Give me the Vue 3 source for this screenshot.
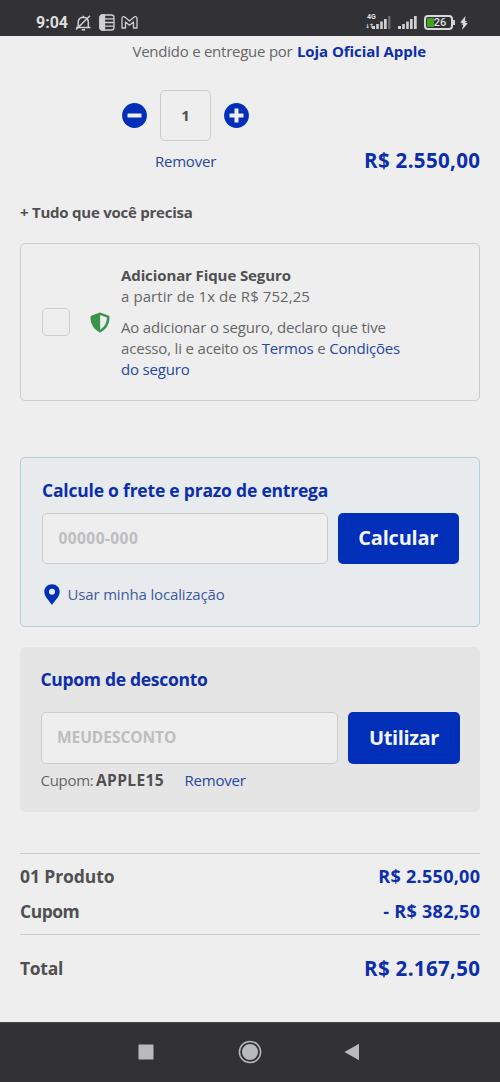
<script setup>
import { ref } from 'vue'

const quantity = ref(1)
const cep = ref('')
const coupon = ref('')
</script>

<template>
  <div class="screen">
    <header class="status">
      <div class="status-left">
        <span class="clock">9:04</span>
        <svg class="bell" width="17" height="18" viewBox="0 0 17 18" fill="none" stroke="#d0d0d2" stroke-width="1.5">
          <path d="M3.2 13.2V8.2C3.2 5.2 5.2 3.4 8.3 3.2c3.1.2 5 2 5 5v5M1.2 13.4h14.2M6.7 15.7h3.4M8.3 1.7v1.5M1 15.5 15 1.8" />
        </svg>
        <svg class="note" width="16" height="17" viewBox="0 0 16 17" fill="none" stroke="#d0d0d2" stroke-width="1.3">
          <rect x=".8" y="1" width="14.2" height="15" rx="2.6" />
          <path d="M1 3.5C1 2 2 1 3.5 1h2v15h-2C2 16 1 15 1 13.500z" fill="#d0d0d2" />
          <path d="M5 4.900h10M5 8.500h10M5 12.100h10" />
        </svg>
        <svg class="mail" width="17" height="13" viewBox="0 0 17 13" fill="none" stroke="#d0d0d2" stroke-width="1.3">
          <path d="M1 2.300C1 .7 2.700.2 3.800 1.100L8.500 5l4.700-3.900C14.300.2 16 .7 16 2.300V12h-3.500V6L8.500 9.200 4.500 6v6H1z" stroke-linejoin="round" />
        </svg>
      </div>
      <div class="status-right">
        <span class="net"><span>4G</span><i>↓↑</i></span>
        <svg class="bars-one" width="19" height="13" viewBox="0 0 19 13" fill="#d0d0d2">
          <path d="M0 10h3v3H0zM4.200 8h2.600v5H4.200zM8.200 5.500h2.600V13H8.200zM12 3h2.700v10H12z" />
          <path d="M16 0h2.500v13H16z" fill="#68686c" />
        </svg>
        <svg class="bars-two" width="19" height="13" viewBox="0 0 19 13" fill="#d0d0d2">
          <path d="M0 10h3v3H0zM4.200 8h2.600v5H4.200zM8.200 5.500h2.600V13H8.200zM12 3h2.700v10H12zM16 0h2.700v13H16z" />
        </svg>
        <div class="battery"><span class="level"></span><span class="percent">26</span></div>
        <svg class="bolt" width="8" height="14" viewBox="0 0 8 14" fill="#d8d8da">
          <path d="M5.500 0 .2 6.500l3 .8-2 .700 2 1L2 14l5.800-6.700-3-.800 2.400-1-2.200-.700z" />
        </svg>
      </div>
    </header>

    <main class="page">
      <p class="seller">
        <span class="seller-label">Vendido e entregue por</span>
        <b class="seller-name">Loja Oficial Apple</b>
      </p>

      <section class="product">
        <div class="quantity">
          <div class="stepper">
            <svg width="25" height="25" viewBox="0 0 25 25" @click="quantity--">
              <circle cx="12.500" cy="12.500" r="12.400" fill="#022fb8" />
              <rect x="5.500" y="10.500" width="14" height="4" rx=".5" fill="#eee" />
            </svg>
            <span class="amount">{{ quantity }}</span>
            <svg width="25" height="25" viewBox="0 0 25 25" @click="quantity++">
              <circle cx="12.500" cy="12.500" r="12.400" fill="#022fb8" />
              <path d="M10.500 5.500h4v5h5v4h-5v5h-4v-5h-5v-4h5z" fill="#eee" />
            </svg>
          </div>
          <a class="link remove-item">Remover</a>
        </div>
        <span class="price large">R$ 2.550,00</span>
      </section>

      <h2 class="needs">+ Tudo que você precisa</h2>

      <section class="insurance">
        <span class="checkbox"></span>
        <svg class="shield" width="20" height="21" viewBox="0 0 20 21">
          <path d="M10 .4 18.300 3.500c.8.300 1.200.8 1.200 1.600C19.500 12 16.300 17.800 10 20.600 3.700 17.800.5 12 .5 5.100c0-.8.4-1.300 1.200-1.600z" fill="#389449" />
          <path d="M10.100 3 16.900 5.600c-.1 5.200-2.300 9.500-6.800 12.100z" fill="#eee" />
        </svg>
        <div class="insurance-text">
          <b class="insurance-title">Adicionar Fique Seguro</b>
          <span class="insurance-price">a partir de 1x de R$ 752,25</span>
          <p>
            Ao adicionar o seguro, declaro que tive<br />
            acesso, li e aceito os <a class="link">Termos</a> e <a class="link">Condições</a><br />
            <a class="link">do seguro</a>
          </p>
        </div>
      </section>

      <section class="shipping">
        <h3 class="shipping-title">Calcule o frete e prazo de entrega</h3>
        <div class="form-row">
          <input v-model="cep" class="field cep" placeholder="00000-000" />
          <button class="button calculate">Calcular</button>
        </div>
        <a class="location">
          <svg width="16" height="21" viewBox="0 0 16 21">
            <path d="M8 .2C3.500.2.300 3.500.300 7.700.300 12.500 5 16.500 8 20.900c3-4.400 7.700-8.400 7.700-13.200C15.700 3.500 12.500.2 8 .2zm0 4.600a3 3 0 1 1 0 6 3 3 0 0 1 0-6z" fill="#022fb8" fill-rule="evenodd" />
          </svg>
          <span>Usar minha localização</span>
        </a>
      </section>

      <section class="coupon">
        <h3 class="coupon-title">Cupom de desconto</h3>
        <div class="form-row">
          <input v-model="coupon" class="field code" placeholder="MEUDESCONTO" />
          <button class="button apply">Utilizar</button>
        </div>
        <p class="applied">
          <span class="applied-label">Cupom:</span>
          <b class="applied-code">APPLE15</b>
          <a class="link remove-coupon">Remover</a>
        </p>
      </section>

      <section class="summary">
        <div class="line"><span class="count">01 Produto</span><span class="price">R$ 2.550,00</span></div>
        <div class="line"><span class="discount">Cupom</span><span class="price">- R$ 382,50</span></div>
        <div class="line total"><span>Total</span><span class="price large">R$ 2.167,50</span></div>
      </section>
    </main>

    <nav class="navbar">
      <svg width="16" height="16" viewBox="0 0 16 16"><rect x=".5" y=".5" width="15" height="15" rx=".5" fill="#b9babc" /></svg>
      <svg class="home" width="24" height="24" viewBox="0 0 24 24">
        <circle cx="12" cy="12" r="10.600" fill="none" stroke="#b9babc" stroke-width="1.500" />
        <circle cx="12" cy="12" r="8" fill="#b9babc" />
      </svg>
      <svg width="16" height="18" viewBox="0 0 16 18"><path d="M.5 9 15 .7v16.600z" fill="#b9babc" /></svg>
    </nav>
  </div>
</template>

<style>
body { background: #eee; }
</style>

<style scoped>
* { box-sizing: border-box; }
p, h2, h3 { margin: 0; }
.screen {
  width: 500px;
  height: 1082px;
  display: flex;
  flex-direction: column;
  overflow: hidden;
  background: #eee;
  color: #666668;
  font-family: "Open Sans", "Noto Sans", sans-serif;
  font-size: 15px;
  line-height: 21px;
  white-space: nowrap;
}

/* status bar */
.status {
  flex: none;
  height: 36px;
  padding: 9px 32px 0 36px;
  display: flex;
  justify-content: space-between;
  background: #323236;
  color: #dededf;
}
.status-left, .status-right { display: flex; align-items: center; height: 27px; }
.clock { font: 700 16px/27px Roboto, sans-serif; width: 38.500px; letter-spacing: 0; }
.note { margin-left: 7px; }
.mail { margin-left: 6.500px; }
.net { width: 11px; height: 15px; margin: -3px -4px 0 0; display: flex; flex-direction: column; font: 700 7px/7px Roboto, sans-serif; }
.net span { margin-left: 2px; }
.net i { font: 700 6px/9px "DejaVu Sans", sans-serif; letter-spacing: -1px; }
.bars-two { margin-left: 7px; }
.battery {
  position: relative;
  width: 29px;
  height: 15px;
  margin: 0 3px 0 7px;
  border: 2px solid #d8d8da;
  border-radius: 4px;
  padding: 1px;
}
.battery::after { content: ""; position: absolute; right: -4px; top: 3px; width: 2px; height: 5px; background: #d0d0d2; }
.level { display: block; width: 7px; height: 100%; border-radius: 1px; background: #3fa51c; }
.percent { position: absolute; inset: 0; padding-left: 3px; text-align: center; font: 500 11px/11px Roboto, sans-serif; }
.bolt { margin-left: 4px; }

/* cart content */
.page { flex: 1; display: flex; flex-direction: column; padding: 5px 20px 0 20px; }
.link { color: #2747a0; }
.seller { padding-left: 112.500px; display: flex; gap: 4.500px; }
.seller-label { letter-spacing: -.25px; }
.seller-name { color: #0c2eab; letter-spacing: -.07px; }
.product { display: flex; justify-content: space-between; align-items: flex-end; margin-top: 28px; height: 82px; }
.quantity { width: 128px; margin-left: 101.500px; height: 82px; display: flex; flex-direction: column; justify-content: space-between; align-items: center; }
.stepper { display: flex; align-items: center; gap: 13px; }
.amount {
  width: 51px;
  height: 51px;
  border: 1.5px solid #ccc;
  border-radius: 5px;
  text-align: center;
  font-weight: 700;
  line-height: 48px;
  color: #505052;
}
.remove-item { letter-spacing: -.2px; }
.price { color: #0c2eab; font-weight: 700; font-size: 18px; letter-spacing: .28px; margin-right: -.28px; }
.large { font-size: 20.5px; letter-spacing: .33px; }
.product .price { line-height: 24px; }
.needs { margin-top: 30px; font-size: 15px; line-height: 21px; letter-spacing: -.24px; color: #505052; }

.insurance {
  margin-top: 20px;
  height: 158px;
  border: 1.5px solid #ccc;
  border-radius: 5px;
  padding-left: 21px;
  display: flex;
  align-items: center;
}
.checkbox { width: 28px; height: 28px; border: 1.5px solid #ccc; border-radius: 5px; }
.shield { margin-left: 20px; }
.insurance-text { display: flex; flex-direction: column; margin-left: 11px; letter-spacing: -.18px; }
.insurance-title { letter-spacing: -.1px; color: #505052; }
.insurance-price { letter-spacing: .08px; margin-bottom: 10px; }

.shipping {
  margin-top: 56px;
  height: 170px;
  padding: 20px 20.5px 0 21px;
  background: #e7ebee;
  border: 1.5px solid #b0cdd8;
  border-radius: 5px;
}
.shipping-title, .coupon-title { font-size: 17.5px; line-height: 24px; color: #0c2eab; letter-spacing: -.21px; }
.form-row { display: flex; gap: 10px; }
.shipping .form-row { margin-top: 11px; }
.field {
  flex: 1;
  min-width: 0;
  height: 51px;
  padding: 0 15.5px 2px;
  background: #eee;
  border: 1.5px solid #ccc;
  border-radius: 5px;
  font: 700 15.5px "Open Sans", sans-serif;
  outline: none;
}
.field::placeholder { color: #bdbdbf; opacity: 1; }
.cep { letter-spacing: .42px; }
.code { letter-spacing: -.05px; }
.button {
  flex: none;
  height: 51px;
  padding: 0 0 2px;
  border: 0;
  border-radius: 5px;
  background: #022fb8;
  color: #f2f5fc;
  font: 700 20px "Open Sans", sans-serif;
}
.calculate { width: 120.5px; letter-spacing: -.2px; }
.apply { width: 112px; letter-spacing: -.38px; }
.location { display: flex; align-items: center; margin-top: 20px; padding-left: 2px; color: #415a9d; letter-spacing: -.16px; }
.location span { margin-left: 7.500px; }

.coupon { margin-top: 20px; height: 165px; padding: 20px 20px 0 20.5px; border-radius: 5px; background: #e5e5e5; }
.coupon-title { letter-spacing: -.3px; }
.coupon .form-row { margin-top: 21px; }
.coupon .field, .coupon .button { height: 52px; }
.applied { display: flex; margin-top: 6px; }
.applied-label { letter-spacing: -.28px; width: 55.500px; }
.applied-code { font-size: 15.5px; letter-spacing: .38px; color: #505052; }
.remove-coupon { margin-left: 20.500px; letter-spacing: -.2px; }

.summary { margin-top: 41px; border-top: 1.5px solid #ccc; padding-top: 5px; color: #505052; font-weight: 700; font-size: 17.5px; }
.line { display: flex; justify-content: space-between; align-items: center; height: 35px; }
.count { letter-spacing: -.08px; }
.discount { letter-spacing: -.5px; }
.total { margin-top: 5px; height: 68px; border-top: 1.5px solid #ccc; letter-spacing: -.3px; }
.total .price { letter-spacing: .33px; }

/* system navigation */
.navbar {
  flex: none;
  height: 60px;
  padding: 0 140px 2px 138px;
  display: flex;
  justify-content: space-between;
  align-items: center;
  background: #323236;
  border-top: 1px solid #48484b;
}
.home { margin-left: 1.500px; }
</style>
